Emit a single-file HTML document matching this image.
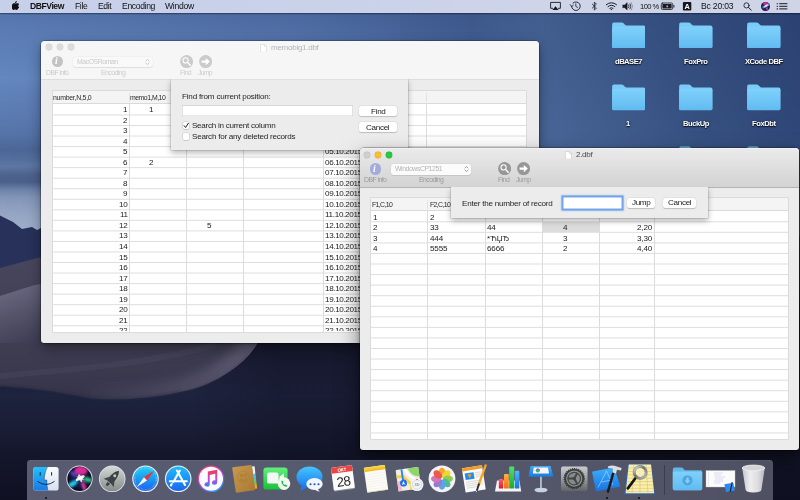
<!DOCTYPE html>
<html><head><meta charset="utf-8"><title>DBFView</title>
<style>
html,body{margin:0;padding:0;}
body{width:800px;height:500px;overflow:hidden;position:relative;background:#1a1c32;font-family:"Liberation Sans",sans-serif;}
.t{position:absolute;white-space:pre;font-family:"Liberation Sans",sans-serif;transform:rotate(.001deg);}
.abs{position:absolute;}
.win{position:absolute;background:#ececec;border-radius:4px 4px 3px 3px;}
.btn{position:absolute;background:#fff;border-radius:2.2px;box-shadow:0 0 0 .4px rgba(0,0,0,.06),0 .6px 1px rgba(0,0,0,.17);}
.inp{position:absolute;background:#fff;box-shadow:inset 0 0 0 .6px #cfcfcf,inset 0 .6px 0 0 #bdbdbd;}
.cb{position:absolute;width:6.9px;height:6.8px;background:#fff;border-radius:1.2px;box-shadow:0 0 0 .5px rgba(0,0,0,.15),0 .4px .6px rgba(0,0,0,.14);}
.tbl{position:absolute;background:#fff;overflow:hidden;box-shadow:0 0 0 .6px #d0d0d0;}
.hd{position:absolute;left:0;right:0;top:0;background:#f4f4f4;border-bottom:.7px solid #dadada;}
.hl{position:absolute;left:0;right:0;height:1px;background:#e3e3e3;}
.vl{position:absolute;width:.8px;background:#dcdcdc;}
.dot{position:absolute;width:2.2px;height:2.2px;border-radius:50%;background:#0c0c10;}
#all{position:absolute;left:0;top:0;width:800px;height:500px;will-change:transform;}
</style></head><body><div id="all">
<svg class="abs" style="left:0;top:0" width="800" height="500" viewBox="0 0 800 500">
<defs>
<linearGradient id="sky" gradientUnits="userSpaceOnUse" x1="0" y1="0" x2="0" y2="250">
<stop offset="0.056" stop-color="#5575ad"/><stop offset="0.120" stop-color="#5b7bb4"/><stop offset="0.240" stop-color="#5f82ba"/><stop offset="0.312" stop-color="#6487bf"/><stop offset="0.380" stop-color="#5f80b8"/><stop offset="0.480" stop-color="#5a79b0"/><stop offset="0.540" stop-color="#5573a6"/><stop offset="0.600" stop-color="#4c6797"/><stop offset="0.632" stop-color="#536d9c"/><stop offset="0.664" stop-color="#5d77a5"/><stop offset="0.700" stop-color="#4e638c"/><stop offset="0.728" stop-color="#4b608a"/><stop offset="0.760" stop-color="#6f84ab"/><stop offset="0.792" stop-color="#8597b9"/><stop offset="0.860" stop-color="#96a7c6"/><stop offset="0.928" stop-color="#a0b0cc"/>
</linearGradient>
<linearGradient id="dk" x1="0" y1="0" x2="1" y2="0">
<stop offset="0" stop-color="#0e1f4a" stop-opacity="0"/><stop offset=".375" stop-color="#0e1f4a" stop-opacity=".15"/><stop offset=".675" stop-color="#0e1f4a" stop-opacity=".42"/><stop offset="1" stop-color="#0e1f4a" stop-opacity=".52"/>
</linearGradient>
<linearGradient id="rsky" gradientUnits="userSpaceOnUse" x1="800" y1="14" x2="540" y2="148"><stop offset="0" stop-color="#2b4172"/><stop offset=".5" stop-color="#365181"/><stop offset="1" stop-color="#4a6799"/></linearGradient>
<linearGradient id="rmg" gradientUnits="userSpaceOnUse" x1="470" y1="0" x2="545" y2="0"><stop offset="0" stop-color="#000"/><stop offset="1" stop-color="#fff"/></linearGradient>
<mask id="rm" maskUnits="userSpaceOnUse" x="470" y="0" width="330" height="250"><rect x="470" y="0" width="330" height="250" fill="url(#rmg)"/></mask>
<linearGradient id="rdk" gradientUnits="userSpaceOnUse" x1="190" y1="0" x2="280" y2="0"><stop offset="0" stop-color="#0c0d1c" stop-opacity="0"/><stop offset="1" stop-color="#0c0d1c" stop-opacity=".3"/></linearGradient>
<linearGradient id="rdg" gradientUnits="userSpaceOnUse" x1="257" y1="343" x2="181" y2="393"><stop offset="0" stop-color="#807e98" stop-opacity=".7"/><stop offset=".6" stop-color="#7a7892" stop-opacity=".45"/><stop offset="1" stop-color="#7a7892" stop-opacity="0"/></linearGradient>
<linearGradient id="rdg2" gradientUnits="userSpaceOnUse" x1="254" y1="0" x2="80" y2="0"><stop offset="0" stop-color="#6b6882" stop-opacity=".62"/><stop offset=".45" stop-color="#66637c" stop-opacity=".4"/><stop offset="1" stop-color="#66637c" stop-opacity="0"/></linearGradient>
<linearGradient id="dkv" x1="0" y1="0" x2="0" y2="1">
<stop offset="0" stop-color="#0c1838" stop-opacity="0"/><stop offset="1" stop-color="#0c1838" stop-opacity=".25"/>
</linearGradient>
<clipPath id="duneC"><path d="M0 268 L41 257 L300 257 L300 343 L256.500 343 C245 362 215 385 180 392 C150 399 110 401 90 398 C50 390 20 387 0 386Z"/></clipPath><filter id="bgb" filterUnits="userSpaceOnUse" x="0" y="300" width="400" height="160"><feGaussianBlur stdDeviation="5"/></filter><filter id="bgb2"><feGaussianBlur stdDeviation=".8"/></filter>
<linearGradient id="dune" gradientUnits="userSpaceOnUse" x1="0" y1="257" x2="0" y2="400">
<stop offset="0" stop-color="#48465c"/><stop offset=".6" stop-color="#3f3d52"/><stop offset=".8" stop-color="#3b394e"/><stop offset="1" stop-color="#343348"/>
</linearGradient>
<linearGradient id="dune2" gradientUnits="userSpaceOnUse" x1="10" y1="290" x2="30" y2="343">
<stop offset="0" stop-color="#68667e"/><stop offset=".45" stop-color="#55536a"/><stop offset="1" stop-color="#3f3d54"/>
</linearGradient>
<linearGradient id="low" gradientUnits="userSpaceOnUse" x1="0" y1="236" x2="0" y2="500">
<stop offset="0" stop-color="#26305a"/><stop offset=".3" stop-color="#1c1e36"/><stop offset=".405" stop-color="#1a1c33"/><stop offset=".6" stop-color="#1e233e"/><stop offset=".72" stop-color="#1a1e36"/><stop offset=".83" stop-color="#14162a"/><stop offset="1" stop-color="#0f1022"/>
</linearGradient>
</defs>
<rect x="0" y="0" width="800" height="250" fill="url(#sky)"/>
<rect x="0" y="0" width="800" height="250" fill="url(#dk)"/>
<rect x="400" y="0" width="400" height="250" fill="url(#dkv)"/>
<rect x="470" y="0" width="330" height="250" fill="url(#rsky)" mask="url(#rm)"/>
<!-- mountains -->
<rect x="0" y="236" width="800" height="264" fill="url(#low)"/>
<path d="M0 215.500 L13 222 L22 229 L32 227 L37 230 L41 228 L60 226 L60 300 L0 300Z" fill="#27315a"/>
<rect x="190" y="300" width="610" height="200" fill="url(#rdk)"/>
<!-- dune -->
<path d="M0 268 L41 257 L300 257 L300 343 L256.500 343 C245 362 215 385 180 392 C150 399 110 401 90 398 C50 390 20 387 0 386Z" fill="url(#dune)"/>
<path d="M0 296 L33 285.500 L41 284 L41 343 L0 343Z" fill="url(#dune2)"/>
<g clip-path="url(#duneC)"><path d="M254 338 C243 360 211 383 176 389 C150 394 120 396 80 393" stroke="url(#rdg2)" stroke-width="20" fill="none" filter="url(#bgb)"/></g>
<path d="M257 343 C246 362 216 385 181 392.500" stroke="url(#rdg)" stroke-width="1.100" fill="none"/>
<path d="M0 386 C20 387 50 390 90 398 C110 401 150 399 180 392" stroke="#2a2c46" stroke-width="1.500" fill="none" opacity=".8" filter="url(#bgb2)"/>
<path d="M0 376 C60 370 140 366 215 345" stroke="#55536b" stroke-width="6" fill="none" opacity=".25"/>
</svg>
<svg width="0" height="0" style="position:absolute"><defs>
<linearGradient id="fg" x1="0" y1="0" x2="0" y2="1"><stop offset="0" stop-color="#7fd1fa"/><stop offset="1" stop-color="#61bbf1"/></linearGradient>
<symbol id="folder" viewBox="0 0 34 27">
<path d="M0 2.2 Q0 .4 1.8 .4 L9.6 .4 Q10.9 .4 11.8 1.5 L13 2.9 Q13.6 3.6 14.8 3.6 L32 3.6 Q33.8 3.6 33.8 5.2 L33.8 25 Q33.8 26.6 32.2 26.6 L1.6 26.6 Q0 26.6 0 25Z" fill="#78ccf7"/>
<path d="M0 6.4 Q0 4.8 1.6 4.8 L32.2 4.8 Q33.8 4.8 33.8 6.4 L33.8 25 Q33.8 26.6 32.2 26.6 L1.6 26.6 Q0 26.6 0 25Z" fill="url(#fg)"/>
</symbol></defs></svg><svg class="abs" style="left:611.7px;top:21.5px" width="33.8" height="26.6"><use href="#folder"/></svg><span class="t" style="left:614.91px;top:56.54px;font-size:7.6px;line-height:9.12px;letter-spacing:-0.499px;color:#fff;font-weight:700;text-shadow:0 .6px 1.2px rgba(0,0,0,.9),0 0 2.5px rgba(0,0,0,.45);">dBASE7</span><svg class="abs" style="left:679.2px;top:21.5px" width="33.8" height="26.6"><use href="#folder"/></svg><span class="t" style="left:684.12px;top:56.54px;font-size:7.6px;line-height:9.12px;letter-spacing:-0.436px;color:#fff;font-weight:700;text-shadow:0 .6px 1.2px rgba(0,0,0,.9),0 0 2.5px rgba(0,0,0,.45);">FoxPro</span><svg class="abs" style="left:746.9px;top:21.5px" width="33.8" height="26.6"><use href="#folder"/></svg><span class="t" style="left:744.81px;top:56.54px;font-size:7.6px;line-height:9.12px;letter-spacing:-0.464px;color:#fff;font-weight:700;text-shadow:0 .6px 1.2px rgba(0,0,0,.9),0 0 2.5px rgba(0,0,0,.45);">XCode DBF</span><svg class="abs" style="left:611.7px;top:84px" width="33.8" height="26.6"><use href="#folder"/></svg><span class="t" style="left:626.49px;top:119.04px;font-size:7.6px;line-height:9.12px;letter-spacing:-0.423px;color:#fff;font-weight:700;text-shadow:0 .6px 1.2px rgba(0,0,0,.9),0 0 2.5px rgba(0,0,0,.45);">1</span><svg class="abs" style="left:679.2px;top:84px" width="33.8" height="26.6"><use href="#folder"/></svg><span class="t" style="left:682.98px;top:119.04px;font-size:7.6px;line-height:9.12px;letter-spacing:-0.478px;color:#fff;font-weight:700;text-shadow:0 .6px 1.2px rgba(0,0,0,.9),0 0 2.5px rgba(0,0,0,.45);">BuckUp</span><svg class="abs" style="left:746.9px;top:84px" width="33.8" height="26.6"><use href="#folder"/></svg><span class="t" style="left:751.83px;top:119.04px;font-size:7.6px;line-height:9.12px;letter-spacing:-0.436px;color:#fff;font-weight:700;text-shadow:0 .6px 1.2px rgba(0,0,0,.9),0 0 2.5px rgba(0,0,0,.45);">FoxDbt</span><svg class="abs" style="left:679.2px;top:146.1px" width="33.8" height="26.6"><use href="#folder"/></svg><svg class="abs" style="left:746.9px;top:146.1px" width="33.8" height="26.6"><use href="#folder"/></svg><div class="abs" style="left:0;top:0;width:800px;height:12.6px;background:linear-gradient(90deg,#c7d0e9 0%,#cad2ea 45%,#ced5e8 70%,#cfd5e7 100%);box-shadow:0 .6px 1.2px rgba(0,0,20,.45)"></div><svg class="abs" style="left:12px;top:1.2px" width="7.4" height="9" viewBox="0 0 170 208"><path fill="#111" d="M150.4 161.9c-3.1 7.2-6.800 13.800-11.100 19.900-5.900 8.300-10.700 14.100-14.400 17.300-5.700 5.300-11.900 8-18.500 8.100-4.700 0-10.400-1.300-17.100-4.100-6.700-2.700-12.800-4.100-18.400-4.100-5.900 0-12.200 1.300-19 4.100-6.700 2.700-12.200 4.100-16.300 4.300-6.300.3-12.600-2.500-18.900-8.300-4-3.500-9-9.500-15-18-6.400-9-11.700-19.500-15.900-31.400C1.200 136.700-1 124.200-1 112.100c0-13.900 3-25.800 9-35.800 4.700-8 11-14.400 18.800-19 7.800-4.700 16.300-7 25.400-7.200 5 0 11.500 1.500 19.700 4.600 8.100 3 13.300 4.600 15.600 4.600 1.700 0 7.500-1.800 17.300-5.400 9.300-3.300 17.100-4.700 23.500-4.200 17.400 1.400 30.400 8.300 39.100 20.600-15.500 9.400-23.200 22.600-23.100 39.500.1 13.200 4.900 24.100 14.300 32.800 4.200 4 9 7.100 14.200 9.300-1.100 3.300-2.300 6.500-3.600 9.500zM110.600 4.100c0 10.300-3.800 20-11.300 28.800-9.100 10.600-20 16.700-31.900 15.700-.2-1.200-.2-2.500-.2-3.900 0-9.900 4.300-20.500 12-29.200 3.800-4.400 8.700-8 14.600-10.900C99.700 1.800 105.300.2 110.500 0c.1 1.400.1 2.800.1 4.100z"/></svg><span class="t" style="left:30.40px;top:1.34px;font-size:8.6px;line-height:10.32px;letter-spacing:-0.456px;color:#111;font-weight:700;">DBFView</span><span class="t" style="left:74.90px;top:1.34px;font-size:8.6px;line-height:10.32px;letter-spacing:-0.390px;color:#111;">File</span><span class="t" style="left:97.60px;top:1.34px;font-size:8.6px;line-height:10.32px;letter-spacing:-0.428px;color:#111;">Edit</span><span class="t" style="left:121.50px;top:1.34px;font-size:8.6px;line-height:10.32px;letter-spacing:-0.355px;color:#111;">Encoding</span><span class="t" style="left:165.00px;top:1.34px;font-size:8.6px;line-height:10.32px;letter-spacing:-0.263px;color:#111;">Window</span><span class="t" style="left:640.00px;top:1.94px;font-size:7.6px;line-height:9.12px;letter-spacing:-0.589px;color:#111;">100 %</span><span class="t" style="left:700.50px;top:1.34px;font-size:8.6px;line-height:10.32px;letter-spacing:-0.203px;color:#111;">Вс 20:03</span><svg class="abs" style="left:545px;top:0" width="250" height="13" viewBox="545 0 250 13" fill="none" stroke="#1a1a22" stroke-width=".9" stroke-linecap="round" stroke-linejoin="round">
<!-- airplay -->
<path d="M552.6 8.3 L550.6 8.3 L550.6 2.4 L560.4 2.4 L560.4 8.3 L558.4 8.3"/><path d="M555.5 6.2 L558.6 9.9 L552.4 9.9Z" fill="#1a1a22" stroke="none"/>
<!-- time machine -->
<path d="M571.6 6.2 A4.3 4.3 0 1 0 573 3"/><path d="M570.2 4.6 L571.6 6.6 L573.4 5.2" stroke-width=".8"/><path d="M575.8 3.8 L575.8 6.4 L577.6 7.4" stroke-width=".8"/>
<!-- bluetooth -->
<path d="M592.3 4.1 L596.4 8 L594.4 10.1 L594.4 2.1 L596.4 4.2 L592.3 8.1" stroke-width=".8"/>
<!-- wifi -->
<path d="M606.3 4.7 Q611.4 .6 616.5 4.7" stroke-width="1"/><path d="M608 6.6 Q611.4 3.8 614.8 6.6" stroke-width="1"/><path d="M609.8 8.3 Q611.4 7 613 8.3" stroke-width="1"/><circle cx="611.4" cy="9.6" r=".7" fill="#1a1a22" stroke="none"/>
<!-- volume -->
<path d="M622.9 4.9 L624.6 4.9 L627.2 2.6 L627.2 10 L624.6 7.7 L622.9 7.7Z" fill="#1a1a22" stroke-width=".4"/><path d="M628.6 4.8 Q629.7 6.3 628.6 7.8" stroke-width=".8"/><path d="M630 3.7 Q631.8 6.3 630 8.9" stroke-width=".8"/><path d="M631.4 2.7 Q633.8 6.3 631.4 9.9" stroke-width=".7" opacity=".5"/>
<!-- battery -->
<rect x="661.3" y="3" width="11.4" height="6.5" rx="1.3" stroke-width=".8"/><rect x="662.4" y="4.1" width="9.2" height="4.3" rx=".5" fill="#1a1a22" stroke="none"/><path d="M673.9 5.3 L673.9 7.2" stroke-width=".9"/><path d="M667.9 4.3 L665.9 6.5 L667.3 6.5 L666.5 8.2 L668.5 6 L667.1 6Z" fill="#d6dae6" stroke="none"/>
<!-- input A -->
<rect x="682.9" y="1.9" width="8.4" height="8.6" rx="1" fill="#16161e" stroke="none"/><text x="687.1" y="9" font-family="Liberation Sans, sans-serif" font-size="7.4" font-weight="700" fill="#fff" stroke="none" text-anchor="middle">A</text>
<!-- search -->
<circle cx="746.5" cy="5.4" r="2.6" stroke-width=".85"/><path d="M748.5 7.4 L751.3 10.2" stroke-width="1"/>
<!-- list -->
<path d="M779.6 3.7 L787 3.7 M779.6 6.3 L787 6.3 M779.6 8.9 L787 8.9" stroke-width="1"/><path d="M777.1 3.7 L777.5 3.7 M777.1 6.3 L777.5 6.3 M777.1 8.9 L777.5 8.9" stroke-width="1.1"/>
</svg><div class="abs" style="left:761.3px;top:1.8px;width:9px;height:9px;border-radius:50%;overflow:hidden;background:radial-gradient(circle at 50% 50%,#2c2a78 0%,#1c1a50 55%,#0c0c24 100%)"><div class="abs" style="left:2.2px;top:.4px;width:5px;height:3px;border-radius:50%;background:#e0309c;filter:blur(.7px);opacity:.9"></div><div class="abs" style="left:.6px;top:3.6px;width:7.6px;height:2px;border-radius:50%;background:linear-gradient(90deg,#28c8f0,#f4f4ff 55%,#6088ff);filter:blur(.5px);transform:rotate(-28deg)"></div><div class="abs" style="left:4.6px;top:5px;width:2px;height:3.4px;border-radius:50%;background:#e848b8;filter:blur(.6px);opacity:.8;transform:rotate(-20deg)"></div></div><div class="win" style="left:41px;top:41px;width:497.8px;height:302px;box-shadow:0 0 0 .5px rgba(0,0,0,.35),0 6px 14px rgba(0,0,0,.35),0 1px 3px rgba(0,0,0,.3)"><div class="abs" style="left:0;top:0;right:0;height:38.2px;background:#f6f6f6;border-radius:4px 4px 0 0;border-bottom:.7px solid #dedede"></div></div><svg class="abs" style="left:45.00px;top:43.30px" width="8" height="8" viewBox="-4 -4 8 8"><circle r="3.4" fill="#d0d0d0"/><circle r="3" fill="#dcdcdc"/></svg><svg class="abs" style="left:56.20px;top:43.30px" width="8" height="8" viewBox="-4 -4 8 8"><circle r="3.4" fill="#d0d0d0"/><circle r="3" fill="#dcdcdc"/></svg><svg class="abs" style="left:67.40px;top:43.30px" width="8" height="8" viewBox="-4 -4 8 8"><circle r="3.4" fill="#d0d0d0"/><circle r="3" fill="#dcdcdc"/></svg><svg class="abs" style="left:260.4px;top:43.8px" width="7" height="8.6" viewBox="0 0 7 8.6"><path d="M.4 .4 L4.4 .4 L6.6 2.6 L6.6 8.2 L.4 8.2Z" fill="#fff" stroke="#d2d2d2" stroke-width=".6"/><path d="M4.4 .4 L4.4 2.6 L6.6 2.6" fill="none" stroke="#d2d2d2" stroke-width=".5"/></svg><span class="t" style="left:270.50px;top:43.14px;font-size:8.1px;line-height:9.72px;letter-spacing:-0.316px;color:#b4b4b4;">memobig1.dbf</span><div class="abs" style="left:51.599999999999994px;top:55.8px;width:11.4px;height:11.4px;border-radius:50%;background:#c3c3c3"></div><span class="t" style="left:55.099999999999994px;top:55.3px;font-family:'Liberation Serif',serif;font-style:italic;font-weight:700;font-size:9.8px;line-height:12px;color:#fff">i</span><span class="t" style="left:46.00px;top:69.06px;font-size:6.9px;line-height:8.28px;letter-spacing:-0.577px;color:#cbcbcb;">DBF info</span><div class="abs" style="left:72.5px;top:56.6px;width:80px;height:10.4px;border-radius:2.4px;background:#f9f9f9;box-shadow:0 0 0 .4px rgba(0,0,0,.04),0 .5px .7px rgba(0,0,0,.08)"></div><span class="t" style="left:76.70px;top:57.86px;font-size:6.9px;line-height:8.28px;letter-spacing:-0.449px;color:#cacaca;">MacOSRoman</span><svg class="abs" style="left:145.4px;top:57.800000000000004px" width="5" height="8" viewBox="0 0 5 8" fill="none" stroke="#bdbdbd" stroke-width=".8" stroke-linecap="round" stroke-linejoin="round"><path d="M1 3 L2.5 1.4 L4 3 M1 5 L2.5 6.6 L4 5"/></svg><span class="t" style="left:101.00px;top:69.06px;font-size:6.9px;line-height:8.28px;letter-spacing:-0.554px;color:#cbcbcb;">Encoding</span><svg class="abs" style="left:179.9px;top:55.1px" width="13.2" height="13.2" viewBox="-6.6 -6.6 13.2 13.2"><circle r="6.5" fill="#cbcbcb"/><circle cx="-1" cy="-1.2" r="2.6" fill="none" stroke="#fff" stroke-width="1.05"/><path d="M1 .9 L3.6 3.6" stroke="#fff" stroke-width="1.45" stroke-linecap="round"/></svg><svg class="abs" style="left:198.70000000000002px;top:55.1px" width="13.2" height="13.2" viewBox="-6.6 -6.6 13.2 13.2"><circle r="6.5" fill="#cbcbcb"/><path d="M-4 -1.1 L.2 -1.1 L.2 -3.6 L4.3 0 L.2 3.6 L.2 1.1 L-4 1.1Z" fill="#fff"/></svg><span class="t" style="left:180.20px;top:69.06px;font-size:6.9px;line-height:8.28px;letter-spacing:-0.602px;color:#cdcdcd;">Find</span><span class="t" style="left:198.30px;top:69.06px;font-size:6.9px;line-height:8.28px;letter-spacing:-0.790px;color:#cdcdcd;">Jump</span><div class="tbl" style="left:52.6px;top:90.6px;width:473.6px;height:241px;"><div class="hd" style="height:12.7px"></div><svg class="abs" style="left:0;top:0" width="473.6" height="241" fill="#dedede"><rect x="0" y="23.44" width="473.6" height="1"/><rect x="0" y="33.98" width="473.6" height="1"/><rect x="0" y="44.52" width="473.6" height="1"/><rect x="0" y="55.06" width="473.6" height="1"/><rect x="0" y="65.60" width="473.6" height="1"/><rect x="0" y="76.14" width="473.6" height="1"/><rect x="0" y="86.68" width="473.6" height="1"/><rect x="0" y="97.22" width="473.6" height="1"/><rect x="0" y="107.76" width="473.6" height="1"/><rect x="0" y="118.30" width="473.6" height="1"/><rect x="0" y="128.84" width="473.6" height="1"/><rect x="0" y="139.38" width="473.6" height="1"/><rect x="0" y="149.92" width="473.6" height="1"/><rect x="0" y="160.46" width="473.6" height="1"/><rect x="0" y="171.00" width="473.6" height="1"/><rect x="0" y="181.54" width="473.6" height="1"/><rect x="0" y="192.08" width="473.6" height="1"/><rect x="0" y="202.62" width="473.6" height="1"/><rect x="0" y="213.16" width="473.6" height="1"/><rect x="0" y="223.70" width="473.6" height="1"/><rect x="0" y="234.24" width="473.6" height="1"/><rect x="0" y="244.78" width="473.6" height="1"/></svg><div class="vl" style="left:76.40px;top:13.4px;bottom:0"></div><div class="vl" style="left:76.40px;top:2.2px;height:9px;background:#e2e2e2"></div><div class="vl" style="left:133.40px;top:13.4px;bottom:0"></div><div class="vl" style="left:133.40px;top:2.2px;height:9px;background:#e2e2e2"></div><div class="vl" style="left:190.60px;top:13.4px;bottom:0"></div><div class="vl" style="left:190.60px;top:2.2px;height:9px;background:#e2e2e2"></div><div class="vl" style="left:270.60px;top:13.4px;bottom:0"></div><div class="vl" style="left:270.60px;top:2.2px;height:9px;background:#e2e2e2"></div><div class="vl" style="left:373.00px;top:13.4px;bottom:0"></div><div class="vl" style="left:373.00px;top:2.2px;height:9px;background:#e2e2e2"></div></div><span class="t" style="left:53.20px;top:94.06px;font-size:6.9px;line-height:8.28px;letter-spacing:-0.248px;color:#2a2a2a;">number,N,5,0</span><span class="t" style="left:129.70px;top:94.06px;font-size:6.9px;line-height:8.28px;letter-spacing:-0.492px;color:#2a2a2a;">memo1,M,10</span><span class="t" style="left:123.42px;top:105.01px;font-size:8.1px;line-height:9.72px;letter-spacing:-0.339px;color:#1c1c1c;">1</span><span class="t" style="left:123.42px;top:115.55px;font-size:8.1px;line-height:9.72px;letter-spacing:-0.339px;color:#1c1c1c;">2</span><span class="t" style="left:123.42px;top:126.09px;font-size:8.1px;line-height:9.72px;letter-spacing:-0.339px;color:#1c1c1c;">3</span><span class="t" style="left:123.42px;top:136.63px;font-size:8.1px;line-height:9.72px;letter-spacing:-0.339px;color:#1c1c1c;">4</span><span class="t" style="left:123.42px;top:147.17px;font-size:8.1px;line-height:9.72px;letter-spacing:-0.339px;color:#1c1c1c;">5</span><span class="t" style="left:325.20px;top:147.17px;font-size:8.1px;line-height:9.72px;letter-spacing:-0.372px;color:#1c1c1c;">05.10.2015</span><span class="t" style="left:123.42px;top:157.71px;font-size:8.1px;line-height:9.72px;letter-spacing:-0.339px;color:#1c1c1c;">6</span><span class="t" style="left:325.20px;top:157.71px;font-size:8.1px;line-height:9.72px;letter-spacing:-0.372px;color:#1c1c1c;">06.10.2015</span><span class="t" style="left:123.42px;top:168.25px;font-size:8.1px;line-height:9.72px;letter-spacing:-0.339px;color:#1c1c1c;">7</span><span class="t" style="left:325.20px;top:168.25px;font-size:8.1px;line-height:9.72px;letter-spacing:-0.372px;color:#1c1c1c;">07.10.2015</span><span class="t" style="left:123.42px;top:178.79px;font-size:8.1px;line-height:9.72px;letter-spacing:-0.339px;color:#1c1c1c;">8</span><span class="t" style="left:325.20px;top:178.79px;font-size:8.1px;line-height:9.72px;letter-spacing:-0.372px;color:#1c1c1c;">08.10.2015</span><span class="t" style="left:123.42px;top:189.33px;font-size:8.1px;line-height:9.72px;letter-spacing:-0.339px;color:#1c1c1c;">9</span><span class="t" style="left:325.20px;top:189.33px;font-size:8.1px;line-height:9.72px;letter-spacing:-0.372px;color:#1c1c1c;">09.10.2015</span><span class="t" style="left:119.26px;top:199.87px;font-size:8.1px;line-height:9.72px;letter-spacing:-0.338px;color:#1c1c1c;">10</span><span class="t" style="left:325.20px;top:199.87px;font-size:8.1px;line-height:9.72px;letter-spacing:-0.372px;color:#1c1c1c;">10.10.2015</span><span class="t" style="left:119.82px;top:210.41px;font-size:8.1px;line-height:9.72px;letter-spacing:-0.315px;color:#1c1c1c;">11</span><span class="t" style="left:325.20px;top:210.41px;font-size:8.1px;line-height:9.72px;letter-spacing:-0.312px;color:#1c1c1c;">11.10.2015</span><span class="t" style="left:119.26px;top:220.95px;font-size:8.1px;line-height:9.72px;letter-spacing:-0.338px;color:#1c1c1c;">12</span><span class="t" style="left:325.20px;top:220.95px;font-size:8.1px;line-height:9.72px;letter-spacing:-0.372px;color:#1c1c1c;">12.10.2015</span><span class="t" style="left:119.26px;top:231.49px;font-size:8.1px;line-height:9.72px;letter-spacing:-0.338px;color:#1c1c1c;">13</span><span class="t" style="left:325.20px;top:231.49px;font-size:8.1px;line-height:9.72px;letter-spacing:-0.372px;color:#1c1c1c;">13.10.2015</span><span class="t" style="left:119.26px;top:242.03px;font-size:8.1px;line-height:9.72px;letter-spacing:-0.338px;color:#1c1c1c;">14</span><span class="t" style="left:325.20px;top:242.03px;font-size:8.1px;line-height:9.72px;letter-spacing:-0.372px;color:#1c1c1c;">14.10.2015</span><span class="t" style="left:119.26px;top:252.57px;font-size:8.1px;line-height:9.72px;letter-spacing:-0.338px;color:#1c1c1c;">15</span><span class="t" style="left:325.20px;top:252.57px;font-size:8.1px;line-height:9.72px;letter-spacing:-0.372px;color:#1c1c1c;">15.10.2015</span><span class="t" style="left:119.26px;top:263.11px;font-size:8.1px;line-height:9.72px;letter-spacing:-0.338px;color:#1c1c1c;">16</span><span class="t" style="left:325.20px;top:263.11px;font-size:8.1px;line-height:9.72px;letter-spacing:-0.372px;color:#1c1c1c;">16.10.2015</span><span class="t" style="left:119.26px;top:273.65px;font-size:8.1px;line-height:9.72px;letter-spacing:-0.338px;color:#1c1c1c;">17</span><span class="t" style="left:325.20px;top:273.65px;font-size:8.1px;line-height:9.72px;letter-spacing:-0.372px;color:#1c1c1c;">17.10.2015</span><span class="t" style="left:119.26px;top:284.19px;font-size:8.1px;line-height:9.72px;letter-spacing:-0.338px;color:#1c1c1c;">18</span><span class="t" style="left:325.20px;top:284.19px;font-size:8.1px;line-height:9.72px;letter-spacing:-0.372px;color:#1c1c1c;">18.10.2015</span><span class="t" style="left:119.26px;top:294.73px;font-size:8.1px;line-height:9.72px;letter-spacing:-0.338px;color:#1c1c1c;">19</span><span class="t" style="left:325.20px;top:294.73px;font-size:8.1px;line-height:9.72px;letter-spacing:-0.372px;color:#1c1c1c;">19.10.2015</span><span class="t" style="left:119.26px;top:305.27px;font-size:8.1px;line-height:9.72px;letter-spacing:-0.338px;color:#1c1c1c;">20</span><span class="t" style="left:325.20px;top:305.27px;font-size:8.1px;line-height:9.72px;letter-spacing:-0.372px;color:#1c1c1c;">20.10.2015</span><span class="t" style="left:119.26px;top:315.81px;font-size:8.1px;line-height:9.72px;letter-spacing:-0.338px;color:#1c1c1c;">21</span><span class="t" style="left:325.20px;top:315.81px;font-size:8.1px;line-height:9.72px;letter-spacing:-0.372px;color:#1c1c1c;">21.10.2015</span><span class="t" style="left:119.26px;top:326.35px;font-size:8.1px;line-height:9.72px;letter-spacing:-0.338px;color:#1c1c1c;clip-path:inset(0 0 4.6px 0);">22</span><span class="t" style="left:325.20px;top:326.35px;font-size:8.1px;line-height:9.72px;letter-spacing:-0.372px;color:#1c1c1c;clip-path:inset(0 0 4.6px 0);">22.10.2015</span><span class="t" style="left:148.71px;top:105.01px;font-size:8.1px;line-height:9.72px;letter-spacing:-0.339px;color:#1c1c1c;">1</span><span class="t" style="left:148.91px;top:157.71px;font-size:8.1px;line-height:9.72px;letter-spacing:-0.339px;color:#1c1c1c;">2</span><span class="t" style="left:206.51px;top:220.95px;font-size:8.1px;line-height:9.72px;letter-spacing:-0.339px;color:#1c1c1c;">5</span><div class="abs" style="left:171px;top:79.3px;width:237px;height:70.6px;background:#ececec;box-shadow:0 0 0 .5px rgba(0,0,0,.18),0 2.5px 6px rgba(0,0,0,.28);clip-path:inset(0 -12px -14px -12px)"></div><span class="t" style="left:182.00px;top:91.54px;font-size:8.1px;line-height:9.72px;letter-spacing:-0.201px;color:#262626;">Find from current position:</span><div class="inp" style="left:182.2px;top:104.7px;width:171.3px;height:11.7px"></div><div class="btn" style="left:358.8px;top:106px;width:38.2px;height:10px"></div><span class="t" style="left:370.62px;top:106.74px;font-size:8.1px;line-height:9.72px;letter-spacing:-0.295px;color:#222;">Find</span><div class="btn" style="left:358.8px;top:122.2px;width:38.2px;height:10px"></div><span class="t" style="left:366.24px;top:122.84px;font-size:8.1px;line-height:9.72px;letter-spacing:-0.315px;color:#222;">Cancel</span><div class="cb" style="left:182.6px;top:122.1px"></div><svg class="abs" style="left:182px;top:121px" width="9" height="9" viewBox="182 121 9 9"><path d="M184.100 125.700 L185.600 127.500 L188.300 123.300" fill="none" stroke="#1e1e1e" stroke-width="1" stroke-linecap="round" stroke-linejoin="round"/></svg><span class="t" style="left:192.20px;top:120.94px;font-size:8.1px;line-height:9.72px;letter-spacing:-0.274px;color:#262626;">Search in current column</span><div class="cb" style="left:182.6px;top:133.1px"></div><span class="t" style="left:192.20px;top:132.14px;font-size:8.1px;line-height:9.72px;letter-spacing:-0.250px;color:#262626;">Search for any deleted records</span><div class="win" style="left:360px;top:148.4px;width:439px;height:301.6px;box-shadow:0 0 0 .5px rgba(0,0,0,.45),0 10px 22px rgba(0,0,0,.5),0 2px 5px rgba(0,0,0,.3)"><div class="abs" style="left:0;top:0;right:0;height:38.2px;background:linear-gradient(180deg,#ebebeb 0%,#e2e2e2 35%,#d3d3d3 100%);border-radius:4px 4px 0 0;border-bottom:.7px solid #b4b4b4;box-shadow:inset 0 .6px 0 rgba(255,255,255,.7)"></div></div><svg class="abs" style="left:363.40px;top:150.50px" width="8" height="8" viewBox="-4 -4 8 8"><circle r="3.4" fill="#bdbdbd"/><circle r="3" fill="#cfcfcf"/></svg><svg class="abs" style="left:374.30px;top:150.50px" width="8" height="8" viewBox="-4 -4 8 8"><circle r="3.4" fill="#dea034"/><circle r="3" fill="#fdbc2e"/></svg><svg class="abs" style="left:385.40px;top:150.50px" width="8" height="8" viewBox="-4 -4 8 8"><circle r="3.4" fill="#1dab29"/><circle r="3" fill="#29c940"/></svg><svg class="abs" style="left:565.4px;top:150.6px" width="7" height="8.6" viewBox="0 0 7 8.6"><path d="M.4 .4 L4.4 .4 L6.6 2.6 L6.6 8.2 L.4 8.2Z" fill="#fff" stroke="#c4c4c4" stroke-width=".6"/><path d="M4.4 .4 L4.4 2.6 L6.6 2.6" fill="none" stroke="#c4c4c4" stroke-width=".5"/></svg><span class="t" style="left:576.00px;top:150.04px;font-size:8.1px;line-height:9.72px;letter-spacing:-0.323px;color:#4a4a4a;">2.dbf</span><div class="abs" style="left:369.7px;top:163.3px;width:11.4px;height:11.4px;border-radius:50%;background:#a3abdb"></div><span class="t" style="left:373.2px;top:162.8px;font-family:'Liberation Serif',serif;font-style:italic;font-weight:700;font-size:9.8px;line-height:12px;color:#fff">i</span><span class="t" style="left:363.80px;top:176.36px;font-size:6.9px;line-height:8.28px;letter-spacing:-0.552px;color:#9a9a9a;">DBF info</span><div class="abs" style="left:391px;top:164.2px;width:80.4px;height:10.4px;border-radius:2.4px;background:#fbfbfb;box-shadow:0 0 0 .4px rgba(0,0,0,.04),0 .5px .7px rgba(0,0,0,.08)"></div><span class="t" style="left:395.20px;top:165.46px;font-size:6.9px;line-height:8.28px;letter-spacing:-0.435px;color:#b4b4b4;">WindowsCP1251</span><svg class="abs" style="left:464.29999999999995px;top:165.39999999999998px" width="5" height="8" viewBox="0 0 5 8" fill="none" stroke="#8a8a8a" stroke-width=".8" stroke-linecap="round" stroke-linejoin="round"><path d="M1 3 L2.5 1.4 L4 3 M1 5 L2.5 6.6 L4 5"/></svg><span class="t" style="left:419.00px;top:176.36px;font-size:6.9px;line-height:8.28px;letter-spacing:-0.542px;color:#9a9a9a;">Encoding</span><svg class="abs" style="left:498.09999999999997px;top:161.8px" width="13.2" height="13.2" viewBox="-6.6 -6.6 13.2 13.2"><circle r="6.5" fill="#979797"/><circle cx="-1" cy="-1.2" r="2.6" fill="none" stroke="#fff" stroke-width="1.05"/><path d="M1 .9 L3.6 3.6" stroke="#fff" stroke-width="1.45" stroke-linecap="round"/></svg><svg class="abs" style="left:516.9px;top:161.8px" width="13.2" height="13.2" viewBox="-6.6 -6.6 13.2 13.2"><circle r="6.5" fill="#979797"/><path d="M-4 -1.1 L.2 -1.1 L.2 -3.6 L4.3 0 L.2 3.6 L.2 1.1 L-4 1.1Z" fill="#fff"/></svg><span class="t" style="left:498.40px;top:176.36px;font-size:6.9px;line-height:8.28px;letter-spacing:-0.552px;color:#9c9c9c;">Find</span><span class="t" style="left:516.20px;top:176.36px;font-size:6.9px;line-height:8.28px;letter-spacing:-0.615px;color:#9c9c9c;">Jump</span><div class="tbl" style="left:370.6px;top:197.9px;width:417px;height:241.2px;"><div class="hd" style="height:12.3px"></div><svg class="abs" style="left:0;top:0" width="417" height="241.2" fill="#dedede"><rect x="0" y="23.26" width="417" height="1"/><rect x="0" y="33.82" width="417" height="1"/><rect x="0" y="44.38" width="417" height="1"/><rect x="0" y="54.94" width="417" height="1"/><rect x="0" y="65.50" width="417" height="1"/><rect x="0" y="76.06" width="417" height="1"/><rect x="0" y="86.62" width="417" height="1"/><rect x="0" y="97.18" width="417" height="1"/><rect x="0" y="107.74" width="417" height="1"/><rect x="0" y="118.30" width="417" height="1"/><rect x="0" y="128.86" width="417" height="1"/><rect x="0" y="139.42" width="417" height="1"/><rect x="0" y="149.98" width="417" height="1"/><rect x="0" y="160.54" width="417" height="1"/><rect x="0" y="171.10" width="417" height="1"/><rect x="0" y="181.66" width="417" height="1"/><rect x="0" y="192.22" width="417" height="1"/><rect x="0" y="202.78" width="417" height="1"/><rect x="0" y="213.34" width="417" height="1"/><rect x="0" y="223.90" width="417" height="1"/><rect x="0" y="234.46" width="417" height="1"/></svg><div class="abs" style="left:172.40px;top:24.40px;width:56.2px;height:10px;background:#dcdcdc"></div><div class="vl" style="left:56.80px;top:13px;bottom:0"></div><div class="vl" style="left:56.80px;top:2.2px;height:9px;background:#e2e2e2"></div><div class="vl" style="left:114.20px;top:13px;bottom:0"></div><div class="vl" style="left:114.20px;top:2.2px;height:9px;background:#e2e2e2"></div><div class="vl" style="left:171.40px;top:13px;bottom:0"></div><div class="vl" style="left:171.40px;top:2.2px;height:9px;background:#e2e2e2"></div><div class="vl" style="left:228.50px;top:13px;bottom:0"></div><div class="vl" style="left:228.50px;top:2.2px;height:9px;background:#e2e2e2"></div><div class="vl" style="left:283.30px;top:13px;bottom:0"></div><div class="vl" style="left:283.30px;top:2.2px;height:9px;background:#e2e2e2"></div></div><span class="t" style="left:372.40px;top:200.96px;font-size:6.9px;line-height:8.28px;letter-spacing:-0.617px;color:#2a2a2a;">F1,C,10</span><span class="t" style="left:429.60px;top:200.96px;font-size:6.9px;line-height:8.28px;letter-spacing:-0.617px;color:#2a2a2a;">F2,C,10</span><span class="t" style="left:373.00px;top:212.57px;font-size:8.1px;line-height:9.72px;letter-spacing:-0.339px;color:#1c1c1c;">1</span><span class="t" style="left:430.00px;top:212.57px;font-size:8.1px;line-height:9.72px;letter-spacing:-0.135px;color:#1c1c1c;">2</span><span class="t" style="left:373.00px;top:223.13px;font-size:8.1px;line-height:9.72px;letter-spacing:-0.339px;color:#1c1c1c;">2</span><span class="t" style="left:430.00px;top:223.13px;font-size:8.1px;line-height:9.72px;letter-spacing:-0.135px;color:#1c1c1c;">33</span><span class="t" style="left:487.30px;top:223.13px;font-size:8.1px;line-height:9.72px;letter-spacing:-0.135px;color:#1c1c1c;">44</span><span class="t" style="left:562.51px;top:223.13px;font-size:8.1px;line-height:9.72px;letter-spacing:-0.339px;color:#1c1c1c;">4</span><span class="t" style="left:637.07px;top:223.13px;font-size:8.1px;line-height:9.72px;letter-spacing:-0.158px;color:#1c1c1c;">2,20</span><span class="t" style="left:373.00px;top:233.69px;font-size:8.1px;line-height:9.72px;letter-spacing:-0.339px;color:#1c1c1c;">3</span><span class="t" style="left:430.00px;top:233.69px;font-size:8.1px;line-height:9.72px;letter-spacing:-0.135px;color:#1c1c1c;">444</span><span class="t" style="left:487.30px;top:233.69px;font-size:8.1px;line-height:9.72px;letter-spacing:-0.172px;color:#1c1c1c;">*ЋЏЂ</span><span class="t" style="left:562.51px;top:233.69px;font-size:8.1px;line-height:9.72px;letter-spacing:-0.339px;color:#1c1c1c;">3</span><span class="t" style="left:637.07px;top:233.69px;font-size:8.1px;line-height:9.72px;letter-spacing:-0.158px;color:#1c1c1c;">3,30</span><span class="t" style="left:373.00px;top:244.25px;font-size:8.1px;line-height:9.72px;letter-spacing:-0.339px;color:#1c1c1c;">4</span><span class="t" style="left:430.00px;top:244.25px;font-size:8.1px;line-height:9.72px;letter-spacing:-0.135px;color:#1c1c1c;">5555</span><span class="t" style="left:487.30px;top:244.25px;font-size:8.1px;line-height:9.72px;letter-spacing:-0.135px;color:#1c1c1c;">6666</span><span class="t" style="left:562.51px;top:244.25px;font-size:8.1px;line-height:9.72px;letter-spacing:-0.339px;color:#1c1c1c;">2</span><span class="t" style="left:637.07px;top:244.25px;font-size:8.1px;line-height:9.72px;letter-spacing:-0.158px;color:#1c1c1c;">4,40</span><div class="abs" style="left:451px;top:186.9px;width:257px;height:31.6px;background:#ececec;box-shadow:0 0 0 .5px rgba(0,0,0,.18),0 2.5px 6px rgba(0,0,0,.28);clip-path:inset(0 -12px -14px -12px)"></div><span class="t" style="left:462.40px;top:198.84px;font-size:8.1px;line-height:9.72px;letter-spacing:-0.236px;color:#262626;">Enter the number of record</span><div class="inp" style="left:562.6px;top:197.2px;width:59.8px;height:11.6px;box-shadow:inset 0 0 0 .5px #7aa7e6,0 0 0 1.5px #6fa3ea,0 0 1.5px 2px rgba(111,163,234,.45)"></div><div class="btn" style="left:627.4px;top:197.7px;width:28px;height:10.3px"></div><span class="t" style="left:632.14px;top:198.44px;font-size:8.1px;line-height:9.72px;letter-spacing:-0.371px;color:#222;">Jump</span><div class="btn" style="left:663.3px;top:197.7px;width:33.1px;height:10.3px"></div><span class="t" style="left:668.14px;top:198.44px;font-size:8.1px;line-height:9.72px;letter-spacing:-0.315px;color:#222;">Cancel</span><div class="abs" style="left:27.4px;top:460.2px;width:745.6px;height:45px;border-radius:3.5px 3.5px 0 0;background:linear-gradient(90deg,#595c71 0%,#565a6d 50%,#4f5163 100%);box-shadow:inset 0 .6px 0 rgba(255,255,255,.10)"></div><div class="abs" style="left:663.5px;top:465px;width:1.1px;height:29.5px;background:#3b3d4e"></div><div class="dot" style="left:44.5px;top:496.5px"></div><div class="dot" style="left:605.5px;top:496.5px"></div><div class="dot" style="left:637.9px;top:496.5px"></div><svg class="abs" style="left:0;top:455px" width="800" height="45" viewBox="0 455 800 45">
<defs>
<linearGradient id="fnL" x1="0" y1="0" x2="0" y2="1"><stop offset="0" stop-color="#21c4fc"/><stop offset="1" stop-color="#1b74e6"/></linearGradient>
<linearGradient id="fnR" x1="0" y1="0" x2="0" y2="1"><stop offset="0" stop-color="#fbfcfe"/><stop offset="1" stop-color="#d5dff0"/></linearGradient>
<clipPath id="fnC"><rect x="33.4" y="467" width="25.2" height="23.6" rx="2.6"/></clipPath>
<radialGradient id="siri" cx=".5" cy=".5" r=".5"><stop offset="0" stop-color="#2a2a5a"/><stop offset=".7" stop-color="#15163a"/><stop offset="1" stop-color="#0a0a20"/></radialGradient>
<clipPath id="siC"><circle cx="79.5" cy="478.8" r="12"/></clipPath><filter id="bl" x="-30%" y="-30%" width="160%" height="160%"><feGaussianBlur stdDeviation="1.1"/></filter><filter id="bl2" x="-30%" y="-30%" width="160%" height="160%"><feGaussianBlur stdDeviation=".6"/></filter>
<linearGradient id="lp" x1="0" y1="0" x2="0" y2="1"><stop offset="0" stop-color="#d4d8d8"/><stop offset="1" stop-color="#858989"/></linearGradient>
<linearGradient id="sf" x1="0" y1="0" x2="0" y2="1"><stop offset="0" stop-color="#1fd0f4"/><stop offset="1" stop-color="#1b62ee"/></linearGradient>
<linearGradient id="as" x1="0" y1="0" x2="0" y2="1"><stop offset="0" stop-color="#20bcfa"/><stop offset="1" stop-color="#1b66ee"/></linearGradient>
<linearGradient id="it" x1=".2" y1="0" x2=".8" y2="1"><stop offset="0" stop-color="#fb3c50"/><stop offset=".45" stop-color="#d040d8"/><stop offset=".8" stop-color="#4a70f8"/><stop offset="1" stop-color="#28d0f0"/></linearGradient>
<linearGradient id="itn" x1="0" y1="0" x2="0" y2="1"><stop offset="0" stop-color="#fb3a4c"/><stop offset=".55" stop-color="#c048d8"/><stop offset="1" stop-color="#3a80f8"/></linearGradient>
<linearGradient id="ct" x1="0" y1="0" x2="1" y2="1"><stop offset="0" stop-color="#c99a52"/><stop offset="1" stop-color="#a8782f"/></linearGradient>
<linearGradient id="ft" x1="0" y1="0" x2="0" y2="1"><stop offset="0" stop-color="#62f07c"/><stop offset="1" stop-color="#17c236"/></linearGradient>
<linearGradient id="ms" x1="0" y1="0" x2="0" y2="1"><stop offset="0" stop-color="#45c6fc"/><stop offset="1" stop-color="#1a7af0"/></linearGradient>
<linearGradient id="nt" x1="0" y1="0" x2="0" y2="1"><stop offset="0" stop-color="#fbd94a"/><stop offset="1" stop-color="#efb41c"/></linearGradient>
<linearGradient id="sp" x1="0" y1="0" x2="0" y2="1"><stop offset="0" stop-color="#c9cdcd"/><stop offset=".5" stop-color="#9a9e9e"/><stop offset="1" stop-color="#606464"/></linearGradient>
<linearGradient id="xc" x1="0" y1="0" x2="0" y2="1"><stop offset="0" stop-color="#3eb0fa"/><stop offset="1" stop-color="#1872e6"/></linearGradient>
<linearGradient id="kn" x1="0" y1="0" x2="0" y2="1"><stop offset="0" stop-color="#44acf6"/><stop offset="1" stop-color="#1878e0"/></linearGradient>
<linearGradient id="tr" x1="0" y1="0" x2="1" y2="0"><stop offset="0" stop-color="#c4c5ca"/><stop offset=".35" stop-color="#eeeef0"/><stop offset=".7" stop-color="#dcdce0"/><stop offset="1" stop-color="#b4b5bc"/></linearGradient>
<linearGradient id="br" x1="0" y1="0" x2="0" y2="1"><stop offset="0" stop-color="#ff6070"/><stop offset="1" stop-color="#d81830"/></linearGradient>
<linearGradient id="bo" x1="0" y1="0" x2="0" y2="1"><stop offset="0" stop-color="#ffb040"/><stop offset="1" stop-color="#f07010"/></linearGradient>
<linearGradient id="bg" x1="0" y1="0" x2="0" y2="1"><stop offset="0" stop-color="#50e070"/><stop offset="1" stop-color="#18a838"/></linearGradient>
<linearGradient id="bb" x1="0" y1="0" x2="0" y2="1"><stop offset="0" stop-color="#50b8ff"/><stop offset="1" stop-color="#1870e8"/></linearGradient>
<linearGradient id="mg" x1="0" y1="0" x2="1" y2="1"><stop offset="0" stop-color="#e8e8e8"/><stop offset=".45" stop-color="#6e6e6e"/><stop offset="1" stop-color="#c4c4c4"/></linearGradient>
</defs>
<!-- finder -->
<g clip-path="url(#fnC)"><rect x="33" y="466" width="26" height="26" fill="url(#fnR)"/>
<path d="M33 466 L47.6 466 C45.6 470 44.4 475 44.2 480 L46.8 480 C46.8 484 47.2 488 48 492 L33 492Z" fill="url(#fnL)"/></g>
<path d="M40.2 472.6 L40.2 475.2 M51.6 472.6 L51.6 475.2" stroke="#1a2030" stroke-width="1" stroke-linecap="round"/>
<path d="M37.8 481.6 Q46 487.6 54.2 481.6" stroke="#1a2030" stroke-width=".9" fill="none" stroke-linecap="round"/>
<path d="M47.6 467 C45.6 470.500 44.400 475 44.200 480 L46.800 480 C46.800 484 47.200 488 48 490.600" stroke="#1a2030" stroke-width=".6" fill="none" opacity=".7"/>
<!-- siri -->
<circle cx="79.5" cy="478.8" r="13.2" fill="#d8d8dc"/><circle cx="79.5" cy="478.8" r="12.2" fill="url(#siri)"/>
<g clip-path="url(#siC)"><g filter="url(#bl)">
<ellipse cx="81" cy="470.500" rx="6.500" ry="4.500" fill="#e42c9c" opacity=".95"/>
<ellipse cx="72.500" cy="484" rx="6" ry="2.600" fill="#20d0f0" opacity=".95" transform="rotate(-32 72.500 484)"/>
<ellipse cx="88" cy="479.800" rx="4.500" ry="2.400" fill="#30d890" opacity=".85" transform="rotate(15 88 479.800)"/>
<ellipse cx="83.800" cy="486.500" rx="1.800" ry="5" fill="#f040b0" opacity=".9" transform="rotate(-18 83.800 486.500)"/>
<ellipse cx="73.500" cy="474" rx="4" ry="2" fill="#5a48e0" opacity=".8" transform="rotate(35 73.500 474)"/>
</g><g filter="url(#bl2)">
<ellipse cx="80.200" cy="478.200" rx="5" ry="1.600" fill="#fff" opacity=".95" transform="rotate(-28 80.200 478.200)"/>
<ellipse cx="80.200" cy="478.200" rx="1.500" ry="4.200" fill="#fff" opacity=".8" transform="rotate(-20 80.200 478.200)"/>
<ellipse cx="80.200" cy="478.200" rx="4" ry="1" fill="#fff" opacity=".7" transform="rotate(25 80.200 478.200)"/>
</g></g>
<!-- launchpad -->
<circle cx="112.2" cy="478.8" r="13.3" fill="#e4e6e6"/><circle cx="112.2" cy="478.8" r="12.5" fill="url(#lp)"/>
<g transform="translate(112.2 478.8) rotate(40)" fill="#3c4242">
<path d="M0 -10.500 C3.200 -7 3.800 -1 3 4.500 L-3 4.500 C-3.800 -1 -3.200 -7 0 -10.500Z"/>
<path d="M-3 0 L-6.600 5.500 L-3 4.500Z M3 0 L6.600 5.500 L3 4.500Z"/>
<path d="M-1.800 5.300 L1.800 5.300 L1 8.800 L-1 8.800Z"/>
<circle cx="0" cy="-4" r="1.500" fill="#c4c8c8"/>
</g>
<!-- safari -->
<circle cx="145.5" cy="478.8" r="13.3" fill="#f0f0f2"/><circle cx="145.5" cy="478.8" r="12.2" fill="url(#sf)"/>
<circle cx="145.5" cy="478.8" r="10.800" fill="none" stroke="#fff" stroke-width="1.200" stroke-dasharray=".4 1" opacity=".55"/>
<path d="M154.200 470.600 L147 480.400 L144 477.200Z" fill="#f2302c"/><path d="M136.800 487 L147 480.400 L144 477.200Z" fill="#f4f4f4"/>
<!-- app store -->
<circle cx="178.200" cy="478.800" r="13.300" fill="#f0f0f2"/><circle cx="178.200" cy="478.800" r="12.200" fill="url(#as)"/>
<g stroke="#fff" stroke-width="2.100" stroke-linecap="round" fill="none"><path d="M179.800 470.600 L173.400 482 M176.900 470.600 L185 485 M169.800 481.200 L186.800 481.200"/></g>
<path d="M170.900 485.400 L171.700 484" stroke="#fff" stroke-width="2.100" stroke-linecap="round"/>
<!-- itunes -->
<circle cx="211" cy="478.800" r="13.300" fill="url(#it)"/><circle cx="211" cy="478.800" r="12.050" fill="#fbfbfd"/>
<path d="M207.800 471.600 L217.200 469.700 L217.200 482.600 A2.600 2.200 0 1 1 215.300 480.500 L215.300 473.800 L209.700 474.900 L209.700 484.400 A2.600 2.200 0 1 1 207.800 482.300Z" fill="url(#itn)"/>
<!-- contacts -->
<path d="M252 466.600 L254.600 466.300 L255.400 473.800 L252.800 474Z" fill="#f4f4f4"/>
<path d="M252.800 474 L255.400 473.800 L256 478.800 L253.400 479Z" fill="#5cc0f2"/>
<path d="M253.400 479 L256 478.800 L256.600 483.800 L254 484Z" fill="#5cd070"/>
<path d="M254 484 L256.600 483.800 L257.200 488.600 L254.600 488.800Z" fill="#f4a820"/>
<path d="M232.200 468 Q232 467.300 232.800 467.200 L250.600 464.900 Q251.600 464.800 251.800 465.800 L255.200 489 Q255.400 490 254.400 490.200 L237 492.800 Q236 492.900 235.800 492Z" fill="url(#ct)"/>
<circle cx="243.400" cy="477.200" r="6" fill="none" stroke="#ad8038" stroke-width=".7" opacity=".8"/>
<circle cx="241.600" cy="475.400" r="1.700" fill="#b08238"/><circle cx="245.400" cy="475" r="1.700" fill="#b08238"/>
<path d="M238.800 480.600 Q241.600 476.200 244 480 Q246.400 476 248.400 479.600 Q246.500 482.800 243.500 483 Q240.500 483 238.800 480.600Z" fill="#b08238"/>
<!-- facetime -->
<rect x="263.400" y="467.400" width="24.200" height="22.200" rx="3.200" fill="url(#ft)"/>
<rect x="267" y="472.400" width="11.600" height="11.200" rx="2.200" fill="#f6f6f6"/><path d="M279.400 476.800 L284 473.200 L284 483 L279.400 479.400Z" fill="#f6f6f6"/>
<circle cx="284" cy="483.600" r="6.300" fill="#f4f6f4"/>
<path d="M281.400 480.800 Q281 483.200 283 485.200 Q285 487.200 287 486.400 L286.800 485 L285.400 484.400 L284.800 485 Q283.400 484.200 282.800 482.800 L283.400 482.200 L282.800 480.800Z" fill="#1cc23c"/>
<!-- messages -->
<ellipse cx="309.500" cy="477" rx="13" ry="10.500" fill="url(#ms)"/><path d="M301 484 Q301.800 488.400 299.800 490.600 Q304.500 490 306.800 486.500Z" fill="#1a7cf0"/>
<ellipse cx="314.500" cy="484" rx="8.200" ry="5.900" fill="#f2f5fb"/><path d="M317.500 488.400 Q318.500 490.800 320 491.400 Q316.800 491.600 315 489.400Z" fill="#f2f5fb"/>
<circle cx="310.500" cy="484.300" r="1.050" fill="#1a56c8"/><circle cx="314.500" cy="484.300" r="1.050" fill="#1a56c8"/><circle cx="318.500" cy="484.300" r="1.050" fill="#1a56c8"/>
<!-- calendar -->
<g transform="rotate(-7.500 343 478.500)">
<rect x="332.400" y="466.400" width="21.200" height="24" rx="1.200" fill="#8a8e92"/>
<rect x="332.400" y="466.400" width="21.200" height="23" rx="1.200" fill="#fbfbfb"/>
<path d="M332.400 467.600 Q332.400 466.400 333.600 466.400 L352.400 466.400 Q353.600 466.400 353.600 467.600 L353.600 472.400 L332.400 472.400Z" fill="#ea4542"/>
<text x="343" y="471.300" font-family="Liberation Sans, sans-serif" font-size="4.600" font-weight="700" fill="#fff" text-anchor="middle" letter-spacing="-.2">ОКТ</text>
<text x="343" y="486.200" font-family="Liberation Sans, sans-serif" font-size="13.400" fill="#2a2a2a" text-anchor="middle" letter-spacing="-.7">28</text>
</g>
<!-- notes -->
<g transform="rotate(-8 376 478.800)">
<rect x="365.400" y="466.300" width="21.200" height="25" rx=".8" fill="#fcfcf7"/>
<rect x="365.400" y="466.300" width="21.200" height="4.200" rx=".8" fill="url(#nt)"/>
<path d="M365.400 473.500 h21.200 M365.400 476 h21.200 M365.400 478.500 h21.200 M365.400 481 h21.200 M365.400 483.500 h21.200 M365.400 486 h21.200 M365.400 488.500 h21.200" stroke="#eceadc" stroke-width=".4"/>
<rect x="365.400" y="490.700" width="21.200" height=".6" fill="#d8cca0"/>
</g>
<!-- maps -->
<g transform="rotate(-8 408.400 479.200)">
<rect x="397" y="468.400" width="22.800" height="21.600" rx=".8" fill="#f1ede2"/>
<path d="M409 468.400 L419.800 468.400 L419.800 478 Q412 477 409 468.400Z" fill="#8fd66a"/>
<path d="M405 468.400 Q408 480 419.800 482.500 L419.800 480 Q410 478 407.500 468.400Z" fill="#fff" opacity=".9"/>
<path d="M397 474 L404 474 L412 484 L412 490 L409 490 L409 485 L402 477 L397 477Z" fill="#f8d048"/>
<path d="M397 480 L400.500 480 L400.500 490 L397 490Z" fill="#f6b8c8"/>
<path d="M402 468.400 L403.800 468.400 L403.800 480 L402 480Z" fill="#2a80f0"/>
<circle cx="403" cy="482.400" r="3.500" fill="#1f6ff0"/><path d="M403 480.200 L404.700 484.200 L403 483.400 L401.300 484.200Z" fill="#fff"/>
</g>
<circle cx="417" cy="484.600" r="6.500" fill="#f2f4f6"/><circle cx="417" cy="484.600" r="4.600" fill="none" stroke="#b8c4d0" stroke-width=".5"/>
<path d="M417 478.500 L417.900 480 L416.100 480Z" fill="#f04030"/>
<text x="417" y="486" font-family="Liberation Sans, sans-serif" font-size="3.800" fill="#667" text-anchor="middle">3D</text>
<!-- photos -->
<circle cx="442" cy="478.800" r="13.400" fill="#f4f4f6"/>
<g transform="translate(442 478.800)" opacity=".9">
<ellipse cx="0" cy="-6" rx="3.400" ry="5" fill="#f89a1c"/>
<ellipse cx="0" cy="-6" rx="3.400" ry="5" fill="#f0d418" transform="rotate(45)"/>
<ellipse cx="0" cy="-6" rx="3.400" ry="5" fill="#8cc83c" transform="rotate(90)"/>
<ellipse cx="0" cy="-6" rx="3.400" ry="5" fill="#3cb88c" transform="rotate(135)"/>
<ellipse cx="0" cy="-6" rx="3.400" ry="5" fill="#4c9ce8" transform="rotate(180)"/>
<ellipse cx="0" cy="-6" rx="3.400" ry="5" fill="#8c6cd0" transform="rotate(225)"/>
<ellipse cx="0" cy="-6" rx="3.400" ry="5" fill="#d068b0" transform="rotate(270)"/>
<ellipse cx="0" cy="-6" rx="3.400" ry="5" fill="#ec4838" transform="rotate(315)"/>
</g>
<!-- pages -->
<g transform="rotate(-9 474 479)">
<rect x="463.600" y="466.600" width="20.400" height="24.600" rx=".6" fill="#fafafa"/>
<rect x="463.600" y="466.600" width="20.400" height="3.200" fill="#f59a23"/>
<rect x="465.600" y="472.200" width="9" height="6.600" fill="#1f8cf2"/><path d="M468 473.600 L472.400 473.600 L470.200 477.600Z" fill="#f59a23"/>
<path d="M476 473 h6 M476 475 h6 M476 477 h6 M465.600 481 h16.400 M465.600 483 h16.400 M465.600 485 h16.400 M465.600 487 h12" stroke="#c4c4c4" stroke-width=".6"/>
</g>
<path d="M485.600 465.400 L478.600 485" stroke="#f5a623" stroke-width="2.300" stroke-linecap="round"/><path d="M478.900 484.200 L476.800 490.800" stroke="#2c2c2c" stroke-width="1.900" stroke-linecap="round"/><path d="M476.800 490.400 L476.300 492.200" stroke="#ccc" stroke-width="1"/>
<!-- numbers -->
<path d="M497 480.400 L519.400 480.400 L521.200 491.400 L495 491.400Z" fill="#f4f4f4"/>
<rect x="498.800" y="479" width="4.400" height="9.600" rx=".9" fill="url(#br)"/>
<rect x="504" y="474" width="4.800" height="14.600" rx=".9" fill="url(#bo)"/>
<rect x="509.200" y="466.600" width="5" height="22" rx=".9" fill="url(#bg)"/>
<rect x="514.800" y="470.800" width="4.500" height="17.800" rx=".9" fill="url(#bb)"/>
<!-- keynote -->
<rect x="540.200" y="476" width="1.500" height="13.500" fill="#c8d4e0"/>
<ellipse cx="541" cy="490" rx="6.500" ry="2.300" fill="#c4d4e4"/>
<path d="M530.600 466 L550.600 466 L553.200 475.800 Q553.300 476.800 552.200 476.800 L529.400 476.800 Q528.400 476.800 528.600 475.800Z" fill="url(#kn)"/>
<path d="M533.800 467.400 L548 467.400 L549 473.600 L532.800 473.600Z" fill="#f6f6f8"/>
<circle cx="537.800" cy="470.500" r="2.100" fill="#40b860"/><path d="M537.800 470.500 L537.800 468.400 A2.100 2.100 0 0 1 539.900 470.500Z" fill="#f04860"/><path d="M537.800 470.500 L535.700 470.500 A2.100 2.100 0 0 1 537.800 468.400Z" fill="#3a90f0"/>
<!-- system preferences -->
<rect x="561" y="466.500" width="26.500" height="24.600" rx="2" fill="url(#sp)"/>
<circle cx="574.200" cy="478.600" r="9.900" fill="#3b3d3d" stroke="#3b3d3d" stroke-width="1.500" stroke-dasharray="1.150 .95"/>
<circle cx="574.200" cy="478.600" r="8.100" fill="#8f9393"/><circle cx="574.200" cy="478.600" r="6.900" fill="#454747"/><circle cx="574.200" cy="478.600" r="5.700" fill="#888c8c"/>
<g stroke="#454747" stroke-width="2" transform="rotate(90 574.200 478.600)"><path d="M574.200 478.600 L574.200 485 M574.200 478.600 L568.650 475.400 M574.200 478.600 L579.750 475.400"/></g>
<circle cx="574.200" cy="478.600" r="1.800" fill="#454747"/>
<!-- xcode -->
<path d="M592.200 472.400 Q592 471.600 592.800 471.400 L613.400 467.400 Q614.200 467.300 614.400 468 L620 485.800 Q620.200 486.600 619.400 486.800 L596.800 491.200 Q596 491.300 595.800 490.600Z" fill="url(#xc)"/>
<path d="M598 487.500 L606.500 471 L613 485 M601.500 482 L611 480.200" stroke="#bfe2ff" stroke-width=".7" fill="none" opacity=".8"/>
<path d="M613.400 472.500 L608 491.600" stroke="#1c1c1e" stroke-width="2.500" stroke-linecap="round"/>
<path d="M607.800 466.600 Q612 464.600 616 466.200 L621.600 468 L621 470.400 L617 469.800 L616 473.400 L612.400 472.400 L613.200 468.800 Q610.500 467.400 608.400 468.200Z" fill="#dcdee2"/>
<!-- dbfview -->
<path d="M627.800 464 L651.200 464 L654.800 494.200 L624.200 494.200Z" fill="#2a64c8"/>
<path d="M628.800 464.500 L651 464.500 L654.200 493.300 L625.600 493.300Z" fill="#f8f2a2"/>
<g stroke="#d9b98c" stroke-width=".7" opacity=".85"><path d="M628.400 468 h23 M628 471.400 h23.800 M627.600 474.800 h24.600 M627.200 478.200 h25.400 M626.800 481.600 h26.200 M626.400 485 h27 M626 488.400 h27.800 M625.800 491.400 h28"/>
<path d="M634 464.500 L632 493.300 M640 464.500 L640 493.300 M646 464.500 L648 493.300"/></g>
<path d="M635.400 478.200 L627.800 488.400" stroke="#161616" stroke-width="2.700" stroke-linecap="round"/>
<circle cx="640.200" cy="472.400" r="5.800" fill="#f6f0b8" fill-opacity=".8" stroke="url(#mg)" stroke-width="2.600"/>
<circle cx="640.200" cy="472.400" r="7.100" fill="none" stroke="#555" stroke-width=".4"/>
<!-- downloads folder -->
<path d="M672.800 469.600 Q672.800 467.600 674.600 467.600 L681.400 467.600 Q682.600 467.600 683.400 468.600 L684.300 469.700 Q684.800 470.200 685.800 470.200 L700.600 470.200 Q702.200 470.200 702.200 471.800 L702.200 488.600 Q702.200 490.200 700.600 490.200 L674.400 490.200 Q672.800 490.200 672.800 488.600Z" fill="#62b8ea"/>
<path d="M672.800 472.800 Q672.800 471.400 674.400 471.400 L700.600 471.400 Q702.200 471.400 702.200 472.800 L702.200 488.600 Q702.200 490.200 700.600 490.200 L674.400 490.200 Q672.800 490.200 672.800 488.600Z" fill="url(#fg)"/>
<circle cx="687.500" cy="480.400" r="5" fill="#4aa6e0"/><path d="M686.300 477.400 L688.700 477.400 L688.700 480.400 L690.600 480.400 L687.500 483.600 L684.400 480.400 L686.300 480.400Z" fill="#84d0f6"/>
<!-- screenshot thumb -->
<rect x="706" y="470.600" width="29" height="16.400" fill="#fbfbfb" stroke="#c8c8cc" stroke-width=".4"/>
<path d="M714 473 h9 M714 475 h7 M715 477 h10 M715 479 h8 M714 481 h9 M714 483 h6" stroke="#c0c8e8" stroke-width=".6"/>
<path d="M708.500 472 L708.500 485.500" stroke="#e0e0e0" stroke-width=".6"/>
<path d="M724.400 484.200 L733.200 482.800 L735 490.600 L726 492Z" fill="#2a8cf0"/><path d="M732.200 482.200 L730.200 491.800" stroke="#1c1c1e" stroke-width="1.100"/>
<!-- trash -->
<path d="M742.200 468 L745.600 489.800 Q746 492.400 753.500 492.400 Q761 492.400 761.400 489.800 L764.800 468Z" fill="url(#tr)"/>
<ellipse cx="753.500" cy="468" rx="11.300" ry="2.900" fill="#d4d4d8" stroke="#f2f2f4" stroke-width=".8"/>
</svg></div></body></html>
